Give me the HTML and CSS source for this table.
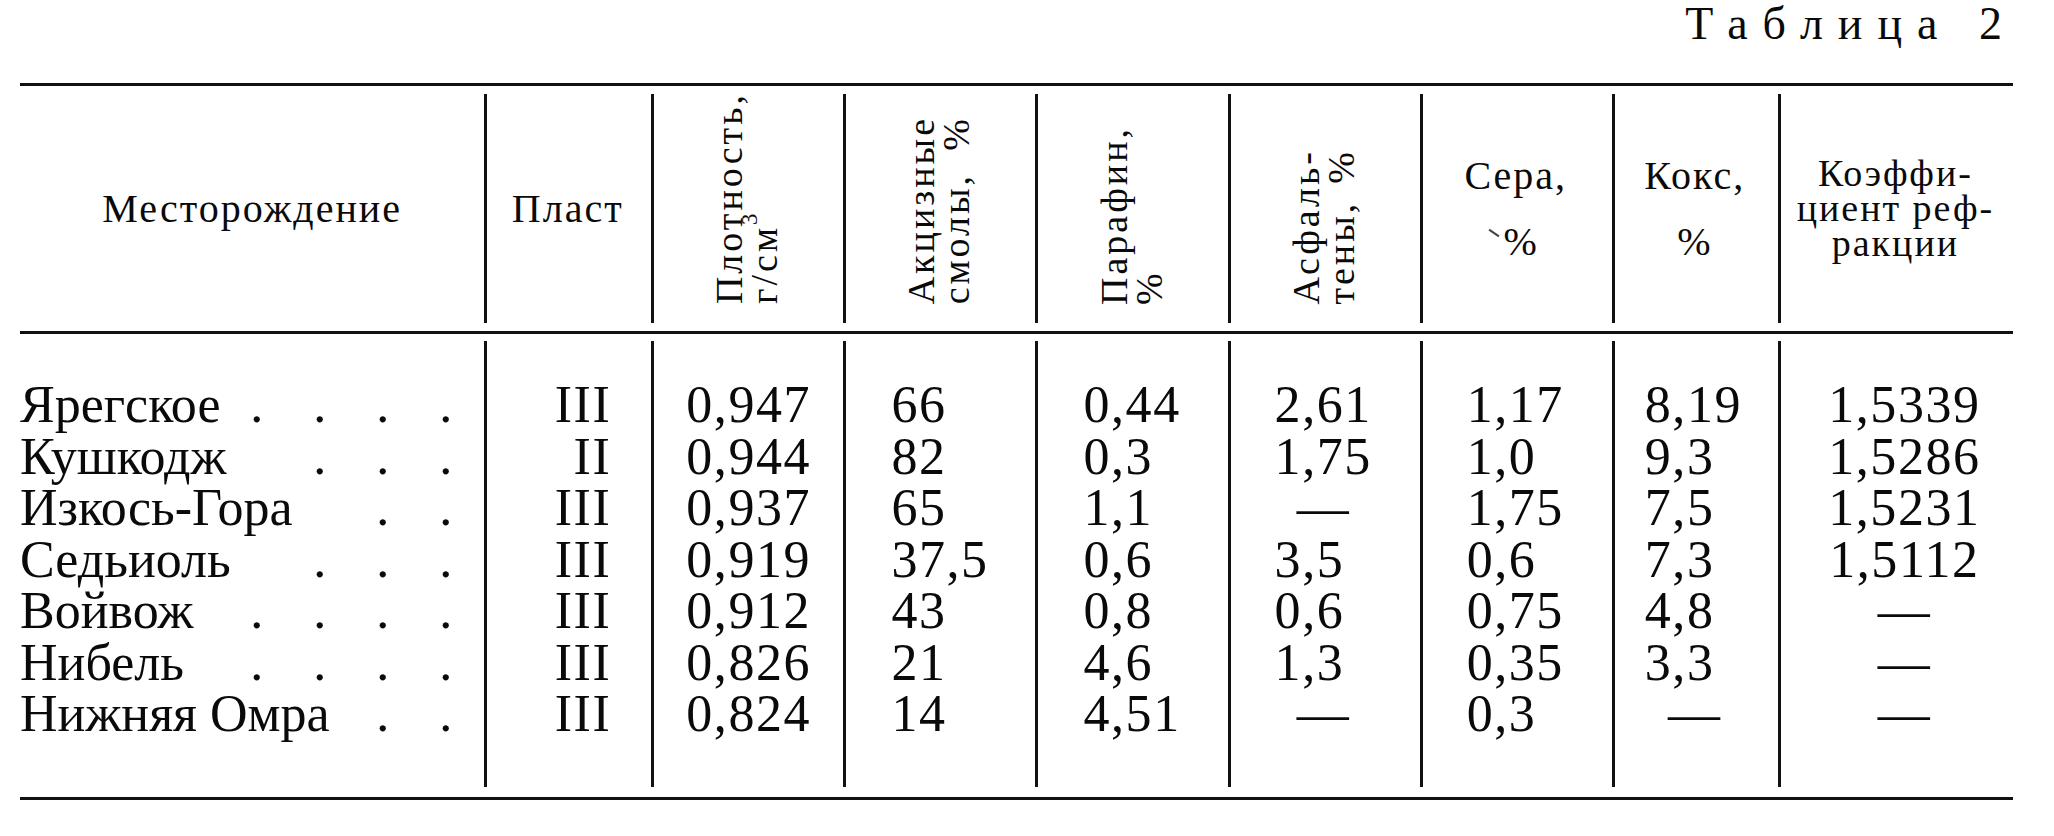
FILE: index.html
```html
<!DOCTYPE html>
<html lang="ru">
<head>
    <meta charset="UTF-8">
    <meta name="viewport" content="width=device-width, initial-scale=1.0">
    <title>Таблица 2</title>
    <link rel="stylesheet" href="styles.css">
</head>
<body>

    <div class="page">
        <p class="caption">Таблица 2</p>

        <table class="oil">
            <colgroup>
                <col class="w-field">
                <col class="w-layer">
                <col class="w-num">
                <col class="w-num">
                <col class="w-num">
                <col class="w-num">
                <col class="w-num">
                <col class="w-coke">
                <col class="w-refr">
            </colgroup>
            <thead>
                <tr>
                    <th>Месторождение</th>
                    <th>Пласт</th>
                    <th class="rot"><div class="turn-box"><span class="turn">Плотность,<br>г/см<sup>3</sup></span></div></th>
                    <th class="rot"><div class="turn-box"><span class="turn">Акцизные<br>смолы, %</span></div></th>
                    <th class="rot"><div class="turn-box"><span class="turn">Парафин,<br>%</span></div></th>
                    <th class="rot"><div class="turn-box"><span class="turn">Асфаль-<br>тены, %</span></div></th>
                    <th class="split"><span>Сера,</span><span><i class="tick"></i>%</span></th>
                    <th class="split"><span>Кокс,</span><span>%</span></th>
                    <th class="three"><span>Коэффи-</span><span>циент реф-</span><span>ракции</span></th>
                </tr>
            </thead>
            <tbody>
                <tr>
                    <td><div class="name"><span>Ярегское</span><span class="dots"><i>.</i><i>.</i><i>.</i><i>.</i></span></div></td>
                    <td class="roman">III</td>
                    <td class="c3">0,947</td>
                    <td class="c4">66</td>
                    <td class="c5">0,44</td>
                    <td class="c6">2,61</td>
                    <td class="c7">1,17</td>
                    <td class="c8">8,19</td>
                    <td class="c9">1,5339</td>
                </tr>
                <tr>
                    <td><div class="name"><span>Кушкодж</span><span class="dots"><i>.</i><i>.</i><i>.</i></span></div></td>
                    <td class="roman">II</td>
                    <td class="c3">0,944</td>
                    <td class="c4">82</td>
                    <td class="c5">0,3</td>
                    <td class="c6">1,75</td>
                    <td class="c7">1,0</td>
                    <td class="c8">9,3</td>
                    <td class="c9">1,5286</td>
                </tr>
                <tr>
                    <td><div class="name"><span>Изкось-Гора</span><span class="dots"><i>.</i><i>.</i></span></div></td>
                    <td class="roman">III</td>
                    <td class="c3">0,937</td>
                    <td class="c4">65</td>
                    <td class="c5">1,1</td>
                    <td class="na">—</td>
                    <td class="c7">1,75</td>
                    <td class="c8">7,5</td>
                    <td class="c9">1,5231</td>
                </tr>
                <tr>
                    <td><div class="name"><span>Седьиоль</span><span class="dots"><i>.</i><i>.</i><i>.</i></span></div></td>
                    <td class="roman">III</td>
                    <td class="c3">0,919</td>
                    <td class="c4">37,5</td>
                    <td class="c5">0,6</td>
                    <td class="c6">3,5</td>
                    <td class="c7">0,6</td>
                    <td class="c8">7,3</td>
                    <td class="c9">1,5112</td>
                </tr>
                <tr>
                    <td><div class="name"><span>Войвож</span><span class="dots"><i>.</i><i>.</i><i>.</i><i>.</i></span></div></td>
                    <td class="roman">III</td>
                    <td class="c3">0,912</td>
                    <td class="c4">43</td>
                    <td class="c5">0,8</td>
                    <td class="c6">0,6</td>
                    <td class="c7">0,75</td>
                    <td class="c8">4,8</td>
                    <td class="c9">—</td>
                </tr>
                <tr>
                    <td><div class="name"><span>Нибель</span><span class="dots"><i>.</i><i>.</i><i>.</i><i>.</i></span></div></td>
                    <td class="roman">III</td>
                    <td class="c3">0,826</td>
                    <td class="c4">21</td>
                    <td class="c5">4,6</td>
                    <td class="c6">1,3</td>
                    <td class="c7">0,35</td>
                    <td class="c8">3,3</td>
                    <td class="c9">—</td>
                </tr>
                <tr>
                    <td><div class="name"><span>Нижняя Омра</span><span class="dots"><i>.</i><i>.</i></span></div></td>
                    <td class="roman">III</td>
                    <td class="c3">0,824</td>
                    <td class="c4">14</td>
                    <td class="c5">4,51</td>
                    <td class="na">—</td>
                    <td class="c7">0,3</td>
                    <td class="na">—</td>
                    <td class="c9">—</td>
                </tr>
            </tbody>
        </table>
    </div>

</body>
</html>
```

FILE: styles.css
```css
* {
    margin: 0;
    padding: 0;
    box-sizing: border-box;
}

body {
    background: #fff;
    color: #0a0a0a;
    font-family: "Liberation Serif", "Times New Roman", serif;
}

.page {
    padding: 2px 0 0 20px;
}

.caption {
    width: 1997px;
    height: 81px;
    text-align: right;
    font-size: 46px;
    line-height: 44px;
    letter-spacing: 15px;
}

/* table */

.oil {
    width: 1993px;
    table-layout: fixed;
    border-collapse: collapse;
    border-top: 3px solid #111;
    border-bottom: 3px solid #111;
}

.w-field { width: 464px; }
.w-layer { width: 167px; }
.w-num { width: 192px; }
.w-coke { width: 166px; }
.w-refr { width: 235px; }

/* column rules stop short of the horizontal rules, like in print */
.oil th + th {
    background: linear-gradient(#111, #111) left center / 3px calc(100% - 16px) no-repeat;
}

.oil td + td {
    background: linear-gradient(#111, #111) left top / 3px 100% no-repeat;
}

.oil tbody tr:first-child td + td {
    background-position: left bottom;
    background-size: 3px calc(100% - 7px);
}

.oil tbody tr:last-child td + td {
    background-position: left top;
    background-size: 3px calc(100% - 10px);
}

.oil thead tr {
    height: 248px;
}

.oil th {
    font-weight: normal;
    font-size: 40px;
    line-height: 35px;
    letter-spacing: 0.05em;
    vertical-align: middle;
    text-align: center;
    border-bottom: 3px solid #111;
}

.turn-box {
    height: 244px;
    display: flex;
    align-items: flex-end;
    justify-content: center;
    padding-bottom: 26px;
}

.turn {
    writing-mode: vertical-rl;
    transform: rotate(180deg);
    font-size: 38px;
    line-height: 35px;
    letter-spacing: 3px;
    text-align: start;
    text-align-last: justify;
}

.turn sup {
    font-size: 0.6em;
    line-height: 0;
}

.split span {
    display: block;
}

.split span + span {
    margin-top: 31px;
}

.tick {
    display: inline-block;
    width: 2px;
    height: 12px;
    background: #444;
    transform: rotate(-55deg);
    margin-right: 9px;
    vertical-align: 16px;
}

.three span {
    display: block;
    height: 35px;
    font-size: 38px;
    line-height: 35px;
}

/* body rows */

.oil td {
    font-size: 52px;
    line-height: 51.5px;
    letter-spacing: 0.03em;
    white-space: nowrap;
    vertical-align: top;
}

.oil tbody tr:first-child td {
    padding-top: 45px;
}

.oil tbody tr:last-child td {
    padding-bottom: 57px;
}

.name {
    display: flex;
    justify-content: space-between;
    padding-right: 32px;
    letter-spacing: 0;
}

.dots i {
    font-style: normal;
}

.dots i + i {
    margin-left: 50px;
}

.roman {
    text-align: right;
    padding-right: 40px;
    letter-spacing: 0.2em;
}

.c3 { padding-left: 35px; }
.c4 { padding-left: 48px; }
.c5 { padding-left: 48px; }
.c6 { padding-left: 47px; }
.c7 { padding-left: 47px; }
.c8 { padding-left: 33px; }

.c9 {
    text-align: center;
    padding-left: 18px;
}

.na {
    text-align: center;
}
```
